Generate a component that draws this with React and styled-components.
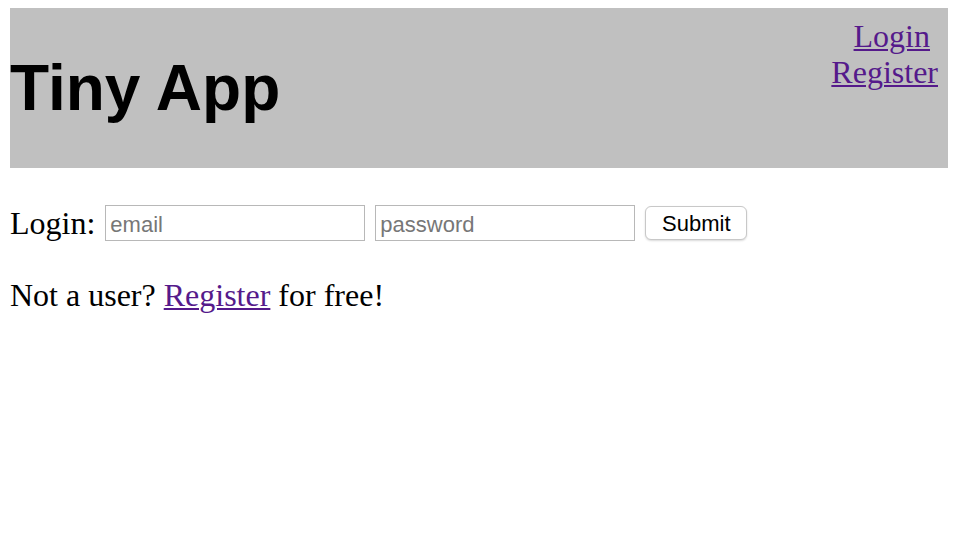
import React from "react";
import styled, { createGlobalStyle } from "styled-components";

const Global = createGlobalStyle`
  html, body { margin: 0; padding: 0; background: #fff; }
  body { font-family: "Liberation Serif", "Times New Roman", serif; color: #000; }
`;

const Page = styled.div`
  padding: 8px 10px;
`;

const Header = styled.header`
  background: #c0c0c0;
  height: 160px;
  box-sizing: border-box;
  padding: 10px 10px 10px 0;
  display: flex;
  justify-content: space-between;
  align-items: center;
`;

const Title = styled.h1`
  margin: 0;
  font-family: "Liberation Sans", Arial, sans-serif;
  font-weight: bold;
  font-size: 64px;
  line-height: 74px;
`;

const Nav = styled.nav`
  align-self: flex-start;
  display: flex;
  flex-direction: column;
  align-items: flex-end;
  font-size: 32px;
  line-height: 36px;
`;

const Link = styled.a`
  color: #551a8b;
  text-decoration: underline;
  text-decoration-thickness: 2px;
  text-underline-offset: 2px;
  padding-right: ${(p) => (p.$pad ? "8px" : "0")};
`;

const Form = styled.form`
  margin-top: 37px;
  display: flex;
  align-items: center;
  gap: 10px;
  height: 36px;
`;

const Label = styled.span`
  font-size: 32px;
  line-height: 36px;
`;

const Input = styled.input`
  box-sizing: border-box;
  width: 260px;
  height: 36px;
  border: 1px solid #b8b8b8;
  padding: 4px 4px 0;
  font-family: "Liberation Sans", Arial, sans-serif;
  font-size: 22px;
  outline: none;
  &::placeholder { color: #777; }
`;

const Button = styled.button`
  box-sizing: border-box;
  width: 102px;
  height: 34px;
  background: #fff;
  border: 1px solid #c8c8c8;
  border-radius: 6px;
  box-shadow: 0 1px 2px rgba(0,0,0,0.15);
  font-family: "Liberation Sans", Arial, sans-serif;
  font-size: 22px;
  color: #000;
  padding: 2px 0 0;
`;

const Para = styled.p`
  margin: 36px 0 0;
  font-size: 32px;
  line-height: 36px;
`;

export default function App() {
  return (
    <Page>
      <Global />
      <Header>
        <Title>Tiny App</Title>
        <Nav>
          <Link href="#" $pad>Login</Link>
          <Link href="#">Register</Link>
        </Nav>
      </Header>
      <Form onSubmit={(e) => e.preventDefault()}>
        <Label>Login:</Label>
        <Input type="email" placeholder="email" />
        <Input type="password" placeholder="password" />
        <Button type="submit">Submit</Button>
      </Form>
      <Para>
        Not a user? <Link href="#">Register</Link> for free!
      </Para>
    </Page>
  );
}
